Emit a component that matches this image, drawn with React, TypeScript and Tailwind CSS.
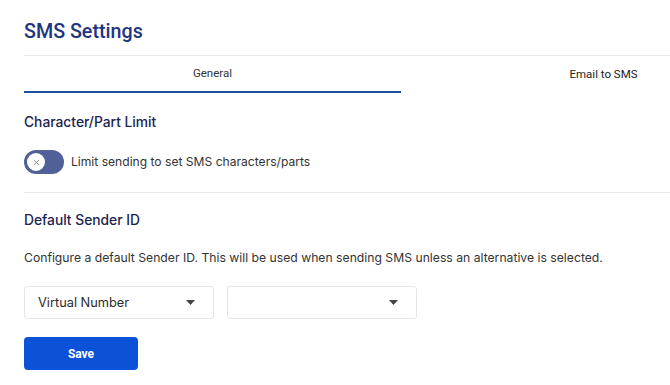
import { X } from 'lucide-react'

function Select({ value }: { value?: string }) {
  return (
    <div className="w-[190px] h-[33px] border border-[#e6e6e6] rounded-[3px] flex items-center justify-between pl-[13px] pr-[18px] bg-white">
      <span className="text-[12.8px] text-[#2b2b2b]">{value}</span>
      <svg width="9" height="5" viewBox="0 0 9 5" className="text-[#444]">
        <path d="M0 0h9L4.5 5z" fill="currentColor" />
      </svg>
    </div>
  )
}

export default function App() {
  return (
    <div className="w-[670px] h-[385px] overflow-hidden bg-white pl-6 font-['Inter',sans-serif]">
      <h1 className="pt-[20px] h-[55px] text-[19.7px] font-medium text-[#1f3580] font-['Roboto',sans-serif] leading-[24px]">
        SMS Settings
      </h1>
      <div className="border-t border-[#e8e8e8] flex w-[900px]">
        <div className="w-[377px] h-[37px] flex items-center justify-center border-b-2 border-[#1d4f9e] text-[11.5px] text-[#333] font-['Roboto',sans-serif]">
          General
        </div>
        <div className="w-[405px] h-[37px] flex items-center justify-center text-[11.5px] text-[#222] font-['Roboto',sans-serif]">
          Email to SMS
        </div>
      </div>

      <h2 className="mt-[19px] text-[13.8px] font-medium text-[#1c2450] leading-[20px]">Character/Part Limit</h2>
      <div className="mt-[18px] flex items-center gap-[7px]">
        <div className="w-[40px] h-[24px] rounded-full bg-[#52609a] flex items-center pl-[3px]">
          <div className="w-[18px] h-[18px] rounded-full bg-white flex items-center justify-center">
            <X className="w-[9px] h-[9px] text-[#666]" strokeWidth={2} />
          </div>
        </div>
        <span className="text-[12.1px] text-[#333]">Limit sending to set SMS characters/parts</span>
      </div>

      <div className="mt-[18px] border-t border-[#e8e8e8]" />

      <h2 className="mt-[17px] text-[13.8px] font-medium text-[#1c2450] leading-[20px]">Default Sender ID</h2>
      <p className="mt-[19px] text-[12.2px] text-[#333] leading-[18px]">
        Configure a default Sender ID. This will be used when sending SMS unless an alternative is selected.
      </p>

      <div className="mt-[19px] flex gap-[13px]">
        <Select value="Virtual Number" />
        <Select />
      </div>

      <button className="mt-[18px] w-[114px] h-[33px] rounded-[4px] bg-[#0b52d8] text-white text-[12px] font-bold font-['Roboto',sans-serif]">
        Save
      </button>
    </div>
  )
}
